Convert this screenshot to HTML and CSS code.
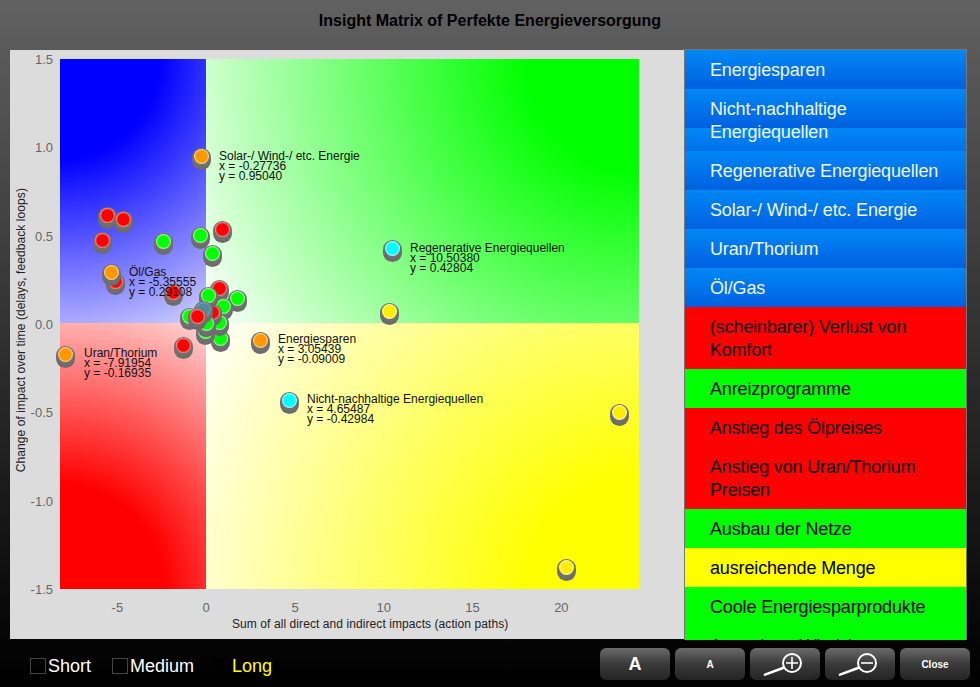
FILE: index.html
```html
<!DOCTYPE html>
<html lang="de">
<head>
    <meta charset="UTF-8">
    <title>Insight Matrix</title>
    <link rel="stylesheet" href="styles.css">
</head>
<body>

<h1 class="titel">Insight Matrix of Perfekte Energieversorgung</h1>

<div class="haupt">
    <div class="chart">
        <div class="y-achse">
            <div class="y-titel">Change of impact over time (delays, feedback loops)</div>
            <div class="y-ticks">
                <span>1.5</span><span>1.0</span><span>0.5</span><span>0.0</span><span>-0.5</span><span>-1.0</span><span>-1.5</span>
            </div>
        </div>
        <div class="plot">
            <div class="q q-blau"></div>
            <div class="q q-gruen"></div>
            <div class="q q-rot"></div>
            <div class="q q-gelb"></div>

            <!-- Punkte -->
            <i class="dot rot" style="left:47px;top:156px"></i>
            <i class="dot rot" style="left:63px;top:160px"></i>
            <i class="dot rot" style="left:42px;top:181px"></i>
            <i class="dot gruen" style="left:103px;top:182px"></i>
            <i class="dot gruen" style="left:140px;top:176px"></i>
            <i class="dot rot" style="left:162px;top:170px"></i>
            <i class="dot gruen" style="left:152px;top:194px"></i>
            <i class="dot rot" style="left:55px;top:222px"></i>
            <i class="dot orange" style="left:51px;top:213px"></i>
            <i class="dot rot" style="left:113px;top:233px"></i>
            <i class="dot rot" style="left:159px;top:229px"></i>
            <i class="dot gruen" style="left:177px;top:239px"></i>
            <i class="dot gruen" style="left:163px;top:247px"></i>
            <i class="dot gruen" style="left:160px;top:279px"></i>
            <i class="dot gruen" style="left:145px;top:272px"></i>
            <i class="dot gruen" style="left:159px;top:263px"></i>
            <i class="dot rot" style="left:152px;top:253px"></i>
            <i class="dot gruen" style="left:129px;top:257px"></i>
            <i class="dot gruen" style="left:146px;top:264px"></i>
            <i class="dot gruen" style="left:148px;top:236px"></i>
            <i class="dot teal" style="left:143px;top:250px"></i>
            <i class="dot rot" style="left:137px;top:257px"></i>
            <i class="dot rot" style="left:123px;top:286px"></i>
            <i class="dot orange" style="left:5px;top:295px"></i>
            <i class="dot orange" style="left:200px;top:281px"></i>
            <i class="dot orange" style="left:141px;top:97px"></i>
            <i class="dot cyan" style="left:332px;top:189px"></i>
            <i class="dot gelb" style="left:329px;top:252px"></i>
            <i class="dot cyan" style="left:229px;top:341px"></i>
            <i class="dot gelb" style="left:559px;top:353px"></i>
            <i class="dot gelb" style="left:506px;top:508px"></i>

            <!-- Beschriftungen -->
            <div class="label" style="left:159px;top:92px">Solar-/ Wind-/ etc. Energie<br>x = -0.27736<br>y = 0.95040</div>
            <div class="label" style="left:350px;top:184px">Regenerative Energiequellen<br>x = 10.50380<br>y = 0.42804</div>
            <div class="label" style="left:69px;top:208px">Öl/Gas<br>x = -5.35555<br>y = 0.29108</div>
            <div class="label" style="left:24px;top:289px">Uran/Thorium<br>x = -7.91954<br>y = -0.16935</div>
            <div class="label" style="left:218px;top:275px">Energiesparen<br>x = 3.05439<br>y = -0.09009</div>
            <div class="label" style="left:247px;top:335px">Nicht-nachhaltige Energiequellen<br>x = 4.65487<br>y = -0.42984</div>
        </div>
        <div class="x-achse">
            <div class="x-ticks">
                <span>-5</span><span>0</span><span>5</span><span>10</span><span>15</span><span>20</span>
            </div>
            <div class="x-titel">Sum of all direct and indirect impacts (action paths)</div>
        </div>
    </div>

    <div class="liste">
        <div class="eintrag blau">Energiesparen</div>
        <div class="eintrag blau">Nicht-nachhaltige Energiequellen</div>
        <div class="eintrag blau">Regenerative Energiequellen</div>
        <div class="eintrag blau">Solar-/ Wind-/ etc. Energie</div>
        <div class="eintrag blau">Uran/Thorium</div>
        <div class="eintrag blau">Öl/Gas</div>
        <div class="eintrag e-rot">(scheinbarer) Verlust von Komfort</div>
        <div class="eintrag e-gruen">Anreizprogramme</div>
        <div class="eintrag e-rot">Anstieg des Ölpreises</div>
        <div class="eintrag e-rot">Anstieg von Uran/Thorium Preisen</div>
        <div class="eintrag e-gruen">Ausbau der Netze</div>
        <div class="eintrag e-gelb">ausreichende Menge</div>
        <div class="eintrag e-gruen">Coole Energiesparprodukte</div>
        <div class="eintrag e-gruen">Ausgebaut Wind-/ Solarenergie</div>
    </div>
</div>

<div class="leiste">
    <div class="filter">
        <span class="box"></span><span class="f-text">Short</span>
        <span class="box"></span><span class="f-text">Medium</span>
        <span class="box aktiv"></span><span class="f-text an">Long</span>
    </div>
    <div class="knoepfe">
        <button class="btn btn-gross">A</button>
        <button class="btn btn-klein">A</button>
        <button class="btn">
            <svg class="lupe" width="40" height="32" viewBox="0 0 40 32" fill="none" stroke="#fff">
                <circle cx="27" cy="15" r="9" stroke-width="2"/>
                <path d="M0 26.7 L18 20" stroke-width="2.5" stroke-linecap="round"/>
                <path d="M21 15 H33 M27 9 V21" stroke-width="1.6"/>
            </svg>
        </button>
        <button class="btn">
            <svg class="lupe" width="40" height="32" viewBox="0 0 40 32" fill="none" stroke="#fff">
                <circle cx="27" cy="15" r="9" stroke-width="2"/>
                <path d="M0 26.7 L18 20" stroke-width="2.5" stroke-linecap="round"/>
                <path d="M21 15 H33" stroke-width="1.6"/>
            </svg>
        </button>
        <button class="btn btn-close">Close</button>
    </div>
</div>

</body>
</html>
```

FILE: styles.css
```css
/* Grundlayout */
html, body {
    margin: 0;
    height: 687px;
    overflow: hidden;
}

body {
    font-family: "Liberation Sans", Arial, sans-serif;
    background: linear-gradient(#616161, #050505 640px, #000);
}

.titel {
    margin: 0;
    height: 49px;
    line-height: 42px;
    text-align: center;
    font-size: 16px;
    font-weight: bold;
    color: #000;
}

.haupt {
    display: flex;
    align-items: flex-start;
    margin-left: 10px;
}

/* Chart */
.chart {
    display: grid;
    grid-template-columns: 50px 579px;
    grid-template-rows: 530px 50px;
    width: 674px;
    height: 589px;
    margin-top: 1px;
    padding-top: 9px;
    box-sizing: border-box;
    background: #dcdcdc;
}

.y-achse {
    display: flex;
    justify-content: space-between;
}

.y-titel {
    writing-mode: vertical-rl;
    transform: rotate(180deg);
    align-self: center;
    margin: 12px 0 0 5px;
    font-size: 12px;
    line-height: 13px;
    letter-spacing: 0.08px;
    color: #222;
    white-space: nowrap;
}

.y-ticks {
    display: flex;
    flex-direction: column;
    justify-content: space-between;
    align-items: flex-end;
    margin: -7px 7px -9px 0;
    font-size: 13px;
    line-height: 16px;
    color: #666;
}

.plot {
    position: relative;
    display: grid;
    grid-template-columns: 146px 433px;
    grid-template-rows: 264px 266px;
}

.q-blau { background: radial-gradient(circle at 0 0, #00f 100px, #fff 344px); }
.q-gruen { background: radial-gradient(circle at 100% 0, #0f0 110px, #fff 507px); }
.q-rot { background: radial-gradient(circle at 0 100%, #f00 105px, #fff 340px); }
.q-gelb { background: radial-gradient(circle at 100% 100%, #ff0 110px, #fff 507px); }

/* Punkte im Chart */
.dot {
    position: absolute;
    width: 19px;
    height: 19px;
    margin: -8.5px 0 0 -9.5px;
    border-radius: 50%;
    background: #707070;
    box-shadow: 0 3px 0 #6c6c6c;
}

.dot::after {
    content: "";
    position: absolute;
    top: 1px;
    left: 2px;
    width: 15px;
    height: 15px;
    border-radius: 50%;
}

.rot::after { background: radial-gradient(circle closest-side, #f00 74%, #ff9a9a 100%); }
.gruen::after { background: radial-gradient(circle closest-side, #0f0 74%, #b4ffb4 100%); }
.orange::after { background: radial-gradient(circle closest-side, #ff9800 74%, #ffdca0 100%); }
.cyan::after { background: radial-gradient(circle closest-side, #0ff 74%, #c8ffff 100%); }
.gelb::after { background: radial-gradient(circle closest-side, #ffee00 74%, #fffbc8 100%); }
.teal::after { background: radial-gradient(circle closest-side, #4d8a9c 74%, #7fa8b4 100%); }

.label {
    position: absolute;
    font-size: 12px;
    line-height: 10px;
    color: #111;
    white-space: nowrap;
}

.x-achse {
    grid-column: 2;
}

.x-ticks {
    display: flex;
    padding: 11px 0 0 13px;
    font-size: 13px;
    line-height: 16px;
    color: #666;
}

.x-ticks span {
    width: 88.8px;
    text-align: center;
}

.x-titel {
    margin: 1px 0 0 172px;
    font-size: 12px;
    line-height: 14px;
    letter-spacing: 0.08px;
    color: #222;
}

/* Liste rechts */
.liste {
    width: 281px;
    height: 590px;
    border: 1px solid #777;
    border-width: 1px 1px 0 1px;
    overflow: hidden;
}

.eintrag {
    padding: 9px 15px 7px 25px;
    font-size: 18px;
    line-height: 23px;
    letter-spacing: -0.15px;
    color: #000;
}

.blau {
    color: #f0f6ff;
    background: linear-gradient(#0088f5, #0060e0) 0 0 / 100% 39px repeat-y;
}

.e-rot { background: #f00; }
.e-gruen { background: #0f0; }
.e-gelb { background: #ff0; }

/* Leiste unten */
.leiste {
    display: flex;
    justify-content: space-between;
    align-items: center;
    height: 48px;
    padding: 0 10px 0 30px;
}

.filter {
    display: flex;
    align-items: center;
    margin-top: 4px;
    font-size: 18px;
    line-height: 22px;
    color: #fff;
}

.box {
    width: 14px;
    height: 14px;
    margin-right: 2px;
    border: 1px solid #444;
}

.box.aktiv {
    margin-right: 1px;
    background: #000;
    border-color: #000;
}

.f-text {
    margin-right: 21px;
}

.f-text.an {
    color: #ff0;
}

.knoepfe {
    display: flex;
    gap: 5px;
}

.btn {
    display: flex;
    align-items: center;
    justify-content: center;
    width: 70px;
    height: 32px;
    padding: 0;
    border: none;
    border-radius: 6px;
    background: linear-gradient(#6a6a6a, #3a3a3a 50%, #242424);
    color: #fff;
    font-family: inherit;
    font-weight: bold;
    font-size: 10px;
}

.btn-gross {
    font-size: 18px;
}

.lupe {
    overflow: visible;
}
```
